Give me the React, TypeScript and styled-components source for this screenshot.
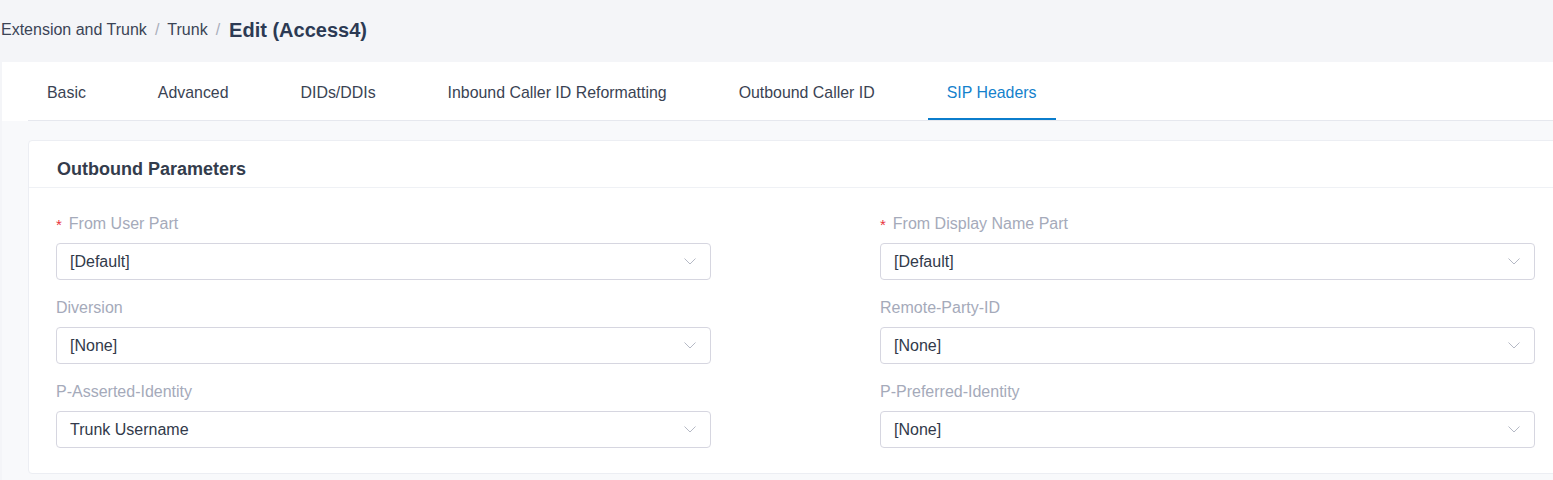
import React from 'react';
import styled, { createGlobalStyle } from 'styled-components';

const GlobalStyle = createGlobalStyle`
    html, body {
        margin: 0;
        padding: 0;
        background: #f4f5f8;
        overflow: hidden;
    }
    body {
        font-family: "Liberation Sans", Arial, sans-serif;
    }
`;

const Page = styled.div`
    width: 1590px;
    height: 480px;
    display: flex;
    flex-direction: column;
    background: #f4f5f8;
`;

const Breadcrumb = styled.div`
    display: flex;
    align-items: center;
    height: 58px;
    padding: 1px 0 0 1px;
    font-size: 16px;
    color: #3b4456;
`;

const Crumb = styled.span`
    color: #3b4456;
`;

const Separator = styled.span`
    color: #a9aebb;
    margin: 0 8px;
`;

const CurrentCrumb = styled.span`
    font-size: 20px;
    font-weight: 700;
    color: #2c3a54;
    margin-left: 1px;
`;

const Panel = styled.div`
    margin: 3px 0 0 2px;
    flex: 1;
    display: flex;
    flex-direction: column;
    background: #f8f9fb;
`;

const TabBarWrapper = styled.div`
    background: #ffffff;
    padding-left: 26px;
`;

const TabBar = styled.div`
    display: flex;
    gap: 34px;
    height: 58px;
    border-bottom: 1px solid #e6e8ee;
`;

const Tab = styled.div<{ active?: boolean }>`
    display: flex;
    align-items: center;
    padding: 4px 19px 0 19px;
    font-size: 15.9px;
    color: ${props => (props.active ? '#1481cc' : '#3a4353')};
    box-shadow: ${props => (props.active ? 'inset 0 -2px 0 #0b7dcc' : 'none')};
    cursor: pointer;
`;

const Content = styled.div`
    padding: 19px 0 0 26px;
`;

const Card = styled.div`
    background: #ffffff;
    border: 1px solid #eceef3;
    border-radius: 4px;
    width: 1534px;
`;

const CardHeader = styled.div`
    display: flex;
    align-items: center;
    height: 47px;
    padding: 10px 28px 0 28px;
    box-sizing: border-box;
    border-bottom: 1px solid #eff1f5;
    font-size: 18px;
    font-weight: 700;
    color: #333c4c;
`;

const CardBody = styled.div`
    display: grid;
    grid-template-columns: 655px 655px;
    column-gap: 169px;
    row-gap: 17px;
    padding: 25px 27px 25px 27px;
`;

const Field = styled.div`
    display: flex;
    flex-direction: column;
    gap: 10px;
`;

const Label = styled.div`
    display: flex;
    align-items: center;
    height: 20px;
    padding-top: 1px;
    box-sizing: border-box;
    font-size: 16px;
    color: #a5aaba;
`;

const Required = styled.span`
    color: #e8323c;
    font-size: 15px;
    margin-right: 7px;
    position: relative;
    top: 1px;
`;

const Select = styled.div`
    display: flex;
    align-items: center;
    justify-content: space-between;
    height: 35px;
    padding: 0 14px 0 13px;
    border: 1px solid #d6d6e0;
    border-radius: 4px;
    font-size: 16px;
    color: #323a4a;
`;

const Chevron = () => (
    <svg width="12" height="7" viewBox="0 0 12 7" fill="none">
        <path d="M0.5 0.5L6 6L11.5 0.5" stroke="#b5b9c5" strokeWidth="1" />
    </svg>
);

const tabs = [
    'Basic',
    'Advanced',
    'DIDs/DDIs',
    'Inbound Caller ID Reformatting',
    'Outbound Caller ID',
    'SIP Headers',
];

const fields = [
    { label: 'From User Part', value: '[Default]', required: true },
    { label: 'From Display Name Part', value: '[Default]', required: true },
    { label: 'Diversion', value: '[None]' },
    { label: 'Remote-Party-ID', value: '[None]' },
    { label: 'P-Asserted-Identity', value: 'Trunk Username' },
    { label: 'P-Preferred-Identity', value: '[None]' },
];

const App = () => (
    <Page>
        <GlobalStyle />
        <Breadcrumb>
            <Crumb>Extension and Trunk</Crumb>
            <Separator>/</Separator>
            <Crumb>Trunk</Crumb>
            <Separator>/</Separator>
            <CurrentCrumb>Edit (Access4)</CurrentCrumb>
        </Breadcrumb>
        <Panel>
            <TabBarWrapper>
                <TabBar>
                    {tabs.map(tab => (
                        <Tab key={tab} active={tab === 'SIP Headers'}>
                            {tab}
                        </Tab>
                    ))}
                </TabBar>
            </TabBarWrapper>
            <Content>
                <Card>
                    <CardHeader>Outbound Parameters</CardHeader>
                    <CardBody>
                        {fields.map(field => (
                            <Field key={field.label}>
                                <Label>
                                    {field.required && <Required>*</Required>}
                                    {field.label}
                                </Label>
                                <Select>
                                    <span>{field.value}</span>
                                    <Chevron />
                                </Select>
                            </Field>
                        ))}
                    </CardBody>
                </Card>
            </Content>
        </Panel>
    </Page>
);

export default App;
